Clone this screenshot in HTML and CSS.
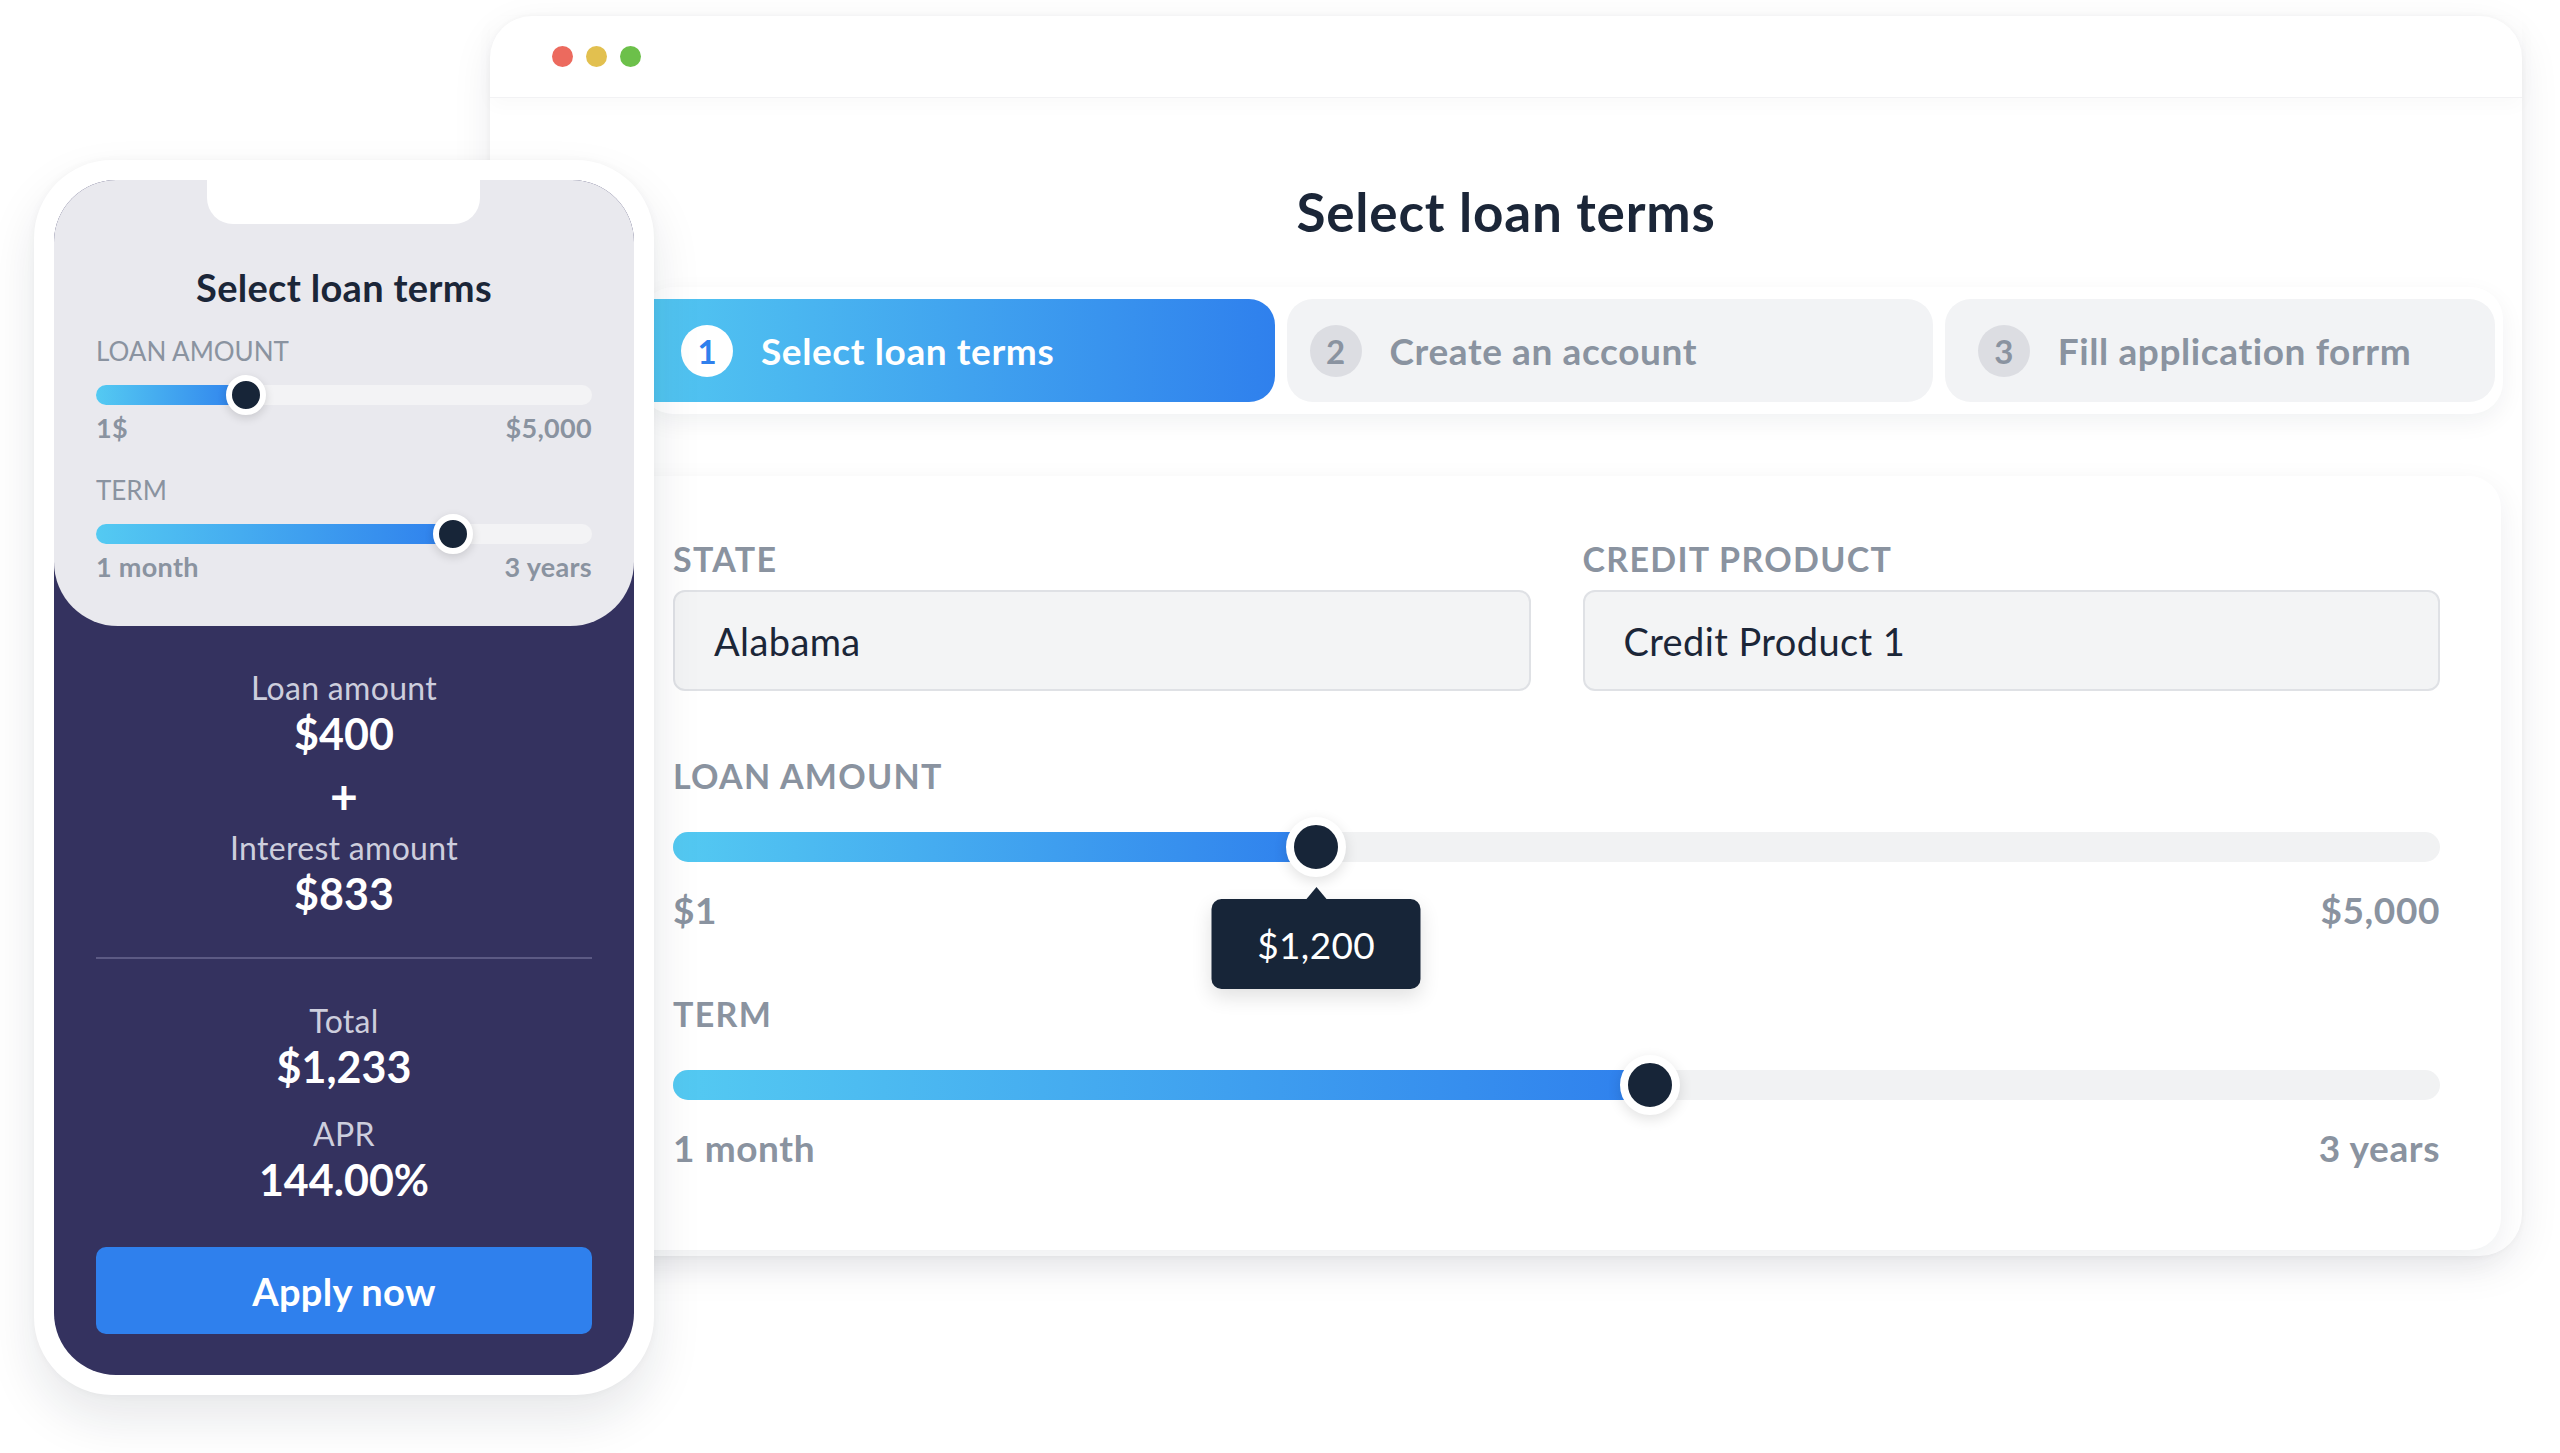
FILE: index.html
```html
<!DOCTYPE html>
<html lang="en">
<head>
    <meta charset="UTF-8">
    <meta name="viewport" content="width=device-width, initial-scale=1.0">
    <title>Select loan terms</title>
    <link rel="stylesheet" href="styles.css">
</head>
<body>
    <div class="stage">
        <!-- Desktop browser mockup -->
        <div class="browser">
            <div class="browser-bar">
                <span class="dot dot-red"></span>
                <span class="dot dot-yellow"></span>
                <span class="dot dot-green"></span>
            </div>
            <div class="browser-body">
                <h1 class="page-title">Select loan terms</h1>

                <div class="steps">
                    <div class="step step-active step-first">
                        <span class="step-num">1</span>
                        <span class="step-label">Select loan terms</span>
                    </div>
                    <div class="step step-second">
                        <span class="step-num">2</span>
                        <span class="step-label">Create an account</span>
                    </div>
                    <div class="step step-third">
                        <span class="step-num">3</span>
                        <span class="step-label">Fill application forrm</span>
                    </div>
                </div>

                <div class="card">
                    <div class="field-row">
                        <div class="field">
                            <div class="field-label">State</div>
                            <div class="field-input">Alabama</div>
                        </div>
                        <div class="field">
                            <div class="field-label">Credit product</div>
                            <div class="field-input">Credit Product 1</div>
                        </div>
                    </div>

                    <div class="range range-amount">
                        <div class="field-label">Loan amount</div>
                        <div class="track">
                            <div class="fill" style="width: 36.4%"></div>
                            <div class="thumb" style="left: 36.4%">
                                <div class="tip">$1,200</div>
                            </div>
                        </div>
                        <div class="range-ends">
                            <span>$1</span>
                            <span>$5,000</span>
                        </div>
                    </div>

                    <div class="range range-term">
                        <div class="field-label">Term</div>
                        <div class="track">
                            <div class="fill" style="width: 55.3%"></div>
                            <div class="thumb" style="left: 55.3%"></div>
                        </div>
                        <div class="range-ends">
                            <span>1 month</span>
                            <span>3 years</span>
                        </div>
                    </div>
                </div>
            </div>
        </div>

        <!-- Phone mockup -->
        <div class="phone">
            <div class="screen">
                <div class="notch"></div>
                <div class="panel">
                    <h2 class="panel-title">Select loan terms</h2>

                    <div class="m-label">Loan amount</div>
                    <div class="m-track">
                        <div class="fill" style="width: 30.3%"></div>
                        <div class="m-thumb" style="left: 30.3%"></div>
                    </div>
                    <div class="m-ends">
                        <span>1$</span>
                        <span>$5,000</span>
                    </div>

                    <div class="m-label m-label-term">Term</div>
                    <div class="m-track">
                        <div class="fill" style="width: 71.9%"></div>
                        <div class="m-thumb" style="left: 71.9%"></div>
                    </div>
                    <div class="m-ends">
                        <span>1 month</span>
                        <span>3 years</span>
                    </div>
                </div>

                <div class="summary">
                    <div class="sum-label">Loan amount</div>
                    <div class="sum-value">$400</div>
                    <div class="sum-plus">+</div>
                    <div class="sum-label">Interest amount</div>
                    <div class="sum-value">$833</div>
                    <hr class="sum-divider">
                    <div class="sum-label sum-total">Total</div>
                    <div class="sum-value">$1,233</div>
                    <div class="sum-label sum-apr">APR</div>
                    <div class="sum-value">144.00%</div>
                    <button class="apply-btn">Apply now</button>
                </div>
            </div>
        </div>
    </div>
</body>
</html>
```

FILE: styles.css
```css
body {
    margin: 0;
    background-color: #ffffff;
    font-family: Lato, "Open Sans", sans-serif;
    color: #1b2638;
}

.stage {
    position: relative;
    width: 2560px;
    height: 1453px;
    overflow: hidden;
}

/* Desktop window */
.browser {
    position: absolute;
    left: 490px;
    top: 16px;
    width: 2032px;
    height: 1240px;
    background-color: #ffffff;
    border-radius: 42px;
    box-shadow: 0 12px 40px rgba(20, 30, 50, 0.08), 0 0 6px rgba(20, 30, 50, 0.04);
}

.browser-bar {
    position: relative;
    height: 81px;
    display: flex;
    align-items: center;
    gap: 13px;
    padding-left: 62px;
    border-bottom: 1px solid #f2f2f4;
    box-shadow: 0 8px 18px rgba(0, 0, 0, 0.025);
}

.dot {
    width: 21px;
    height: 21px;
    border-radius: 50%;
}

.dot-red { background-color: #ec6a5e; }
.dot-yellow { background-color: #e2c04f; }
.dot-green { background-color: #6cc04a; }

.browser-body {
    display: flex;
    flex-direction: column;
}

.page-title {
    margin: 84px 0 0;
    text-align: center;
    font-size: 53px;
    line-height: 60px;
    font-weight: 700;
    letter-spacing: 0.8px;
    color: #1b2638;
}

.steps {
    display: flex;
    gap: 12px;
    margin: 45px 19px 0 151px;
    padding: 12px 8px 12px 12px;
    background-color: #ffffff;
    border-radius: 32px;
    box-shadow: 0 8px 24px rgba(20, 30, 50, 0.06);
}

.step {
    height: 103px;
    display: flex;
    align-items: center;
    gap: 28px;
    padding-left: 28px;
    background-color: #f2f3f5;
    border-radius: 26px;
}

.step-first { flex: 622 1 0; border-radius: 0 26px 26px 0; }
.step-second { flex: 653 1 0; padding-left: 23px; }
.step-third { flex: 542 1 0; padding-left: 33px; }

.step-num {
    width: 52px;
    height: 52px;
    border-radius: 50%;
    display: flex;
    align-items: center;
    justify-content: center;
    background-color: #dcdde2;
    color: #8a93a0;
    font-size: 33px;
    font-weight: 700;
}

.step-label {
    font-size: 37px;
    font-weight: 700;
    letter-spacing: 0.6px;
    color: #8a93a0;
}

.step-active {
    background: linear-gradient(90deg, #52c6f1 0%, #2f80ed 100%);
}

.step-active .step-num {
    background-color: #ffffff;
    color: #2f80ed;
}

.step-active .step-label {
    color: #ffffff;
}

/* Form card */
.card {
    margin: 62px 21px 0 122px;
    padding: 64px 61px 82px;
    background-color: #ffffff;
    border-radius: 32px;
    box-shadow: 0 10px 30px rgba(20, 30, 50, 0.07);
}

.field-row {
    display: grid;
    grid-template-columns: 1fr 1fr;
    gap: 52px;
}

.field-label {
    font-size: 34px;
    line-height: 38px;
    font-weight: 700;
    letter-spacing: 1.3px;
    text-transform: uppercase;
    color: #8a93a0;
}

.field-input {
    margin-top: 12px;
    height: 97px;
    display: flex;
    align-items: center;
    padding-left: 39px;
    background-color: #f3f4f5;
    border: 2px solid #dfe1e5;
    border-radius: 12px;
    font-size: 38px;
    letter-spacing: 0.4px;
    color: #1b2638;
}

.range-amount {
    margin-top: 66px;
}

.range-term {
    margin-top: 65px;
}

.track {
    position: relative;
    height: 30px;
    margin-top: 37px;
    background-color: #f1f2f3;
    border-radius: 15px;
}

.fill {
    height: 100%;
    border-radius: inherit;
    background: linear-gradient(90deg, #54caf2 0%, #2f80ed 100%);
}

.thumb {
    position: absolute;
    top: 50%;
    width: 44px;
    height: 44px;
    border: 8px solid #ffffff;
    border-radius: 50%;
    background-color: #172538;
    transform: translate(-50%, -50%);
    box-shadow: 0 4px 14px rgba(0, 0, 0, 0.12);
}

.tip {
    position: absolute;
    top: calc(100% + 30px);
    left: 50%;
    transform: translateX(-50%);
    width: 209px;
    height: 90px;
    display: flex;
    align-items: center;
    justify-content: center;
    background-color: #172538;
    border-radius: 10px;
    color: #ffffff;
    font-size: 37px;
    letter-spacing: 0.4px;
    box-shadow: 0 8px 20px rgba(0, 0, 0, 0.12);
}

.tip::before {
    content: "";
    position: absolute;
    top: -12px;
    left: 50%;
    margin-left: -10px;
    border-left: 10px solid transparent;
    border-right: 10px solid transparent;
    border-bottom: 12px solid #172538;
}

.range-ends {
    display: flex;
    justify-content: space-between;
    margin-top: 28px;
    font-size: 37px;
    line-height: 40px;
    font-weight: 700;
    letter-spacing: 0.6px;
    color: #8a93a0;
}

/* Phone */
.phone {
    position: absolute;
    left: 34px;
    top: 160px;
    width: 620px;
    height: 1235px;
    padding: 20px;
    box-sizing: border-box;
    background-color: #ffffff;
    border-radius: 78px;
    box-shadow: 0 24px 50px rgba(20, 30, 50, 0.1), 0 0 8px rgba(20, 30, 50, 0.04);
}

.screen {
    position: relative;
    height: 100%;
    display: flex;
    flex-direction: column;
    background-color: #34325f;
    border-radius: 62px;
    overflow: hidden;
}

.notch {
    position: absolute;
    top: 0;
    left: 153px;
    width: 273px;
    height: 44px;
    background-color: #ffffff;
    border-radius: 0 0 26px 26px;
}

.panel {
    padding: 85px 42px 44px;
    background-color: #e9e9ee;
    border-radius: 0 0 64px 64px;
}

.panel-title {
    margin: 0;
    text-align: center;
    font-size: 38px;
    line-height: 44px;
    font-weight: 700;
    letter-spacing: 0.3px;
    color: #1b2638;
}

.m-label {
    margin-top: 26px;
    font-size: 26px;
    line-height: 32px;
    text-transform: uppercase;
    color: #8a93a0;
}

.m-label-term {
    margin-top: 31px;
}

.m-track {
    position: relative;
    height: 20px;
    margin-top: 18px;
    background-color: #f3f3f5;
    border-radius: 10px;
}

.m-thumb {
    position: absolute;
    top: 50%;
    width: 28px;
    height: 28px;
    border: 6px solid #ffffff;
    border-radius: 50%;
    background-color: #172538;
    transform: translate(-50%, -50%);
    box-shadow: 0 3px 10px rgba(0, 0, 0, 0.14);
}

.m-ends {
    display: flex;
    justify-content: space-between;
    margin-top: 8px;
    font-size: 27px;
    line-height: 30px;
    font-weight: 700;
    letter-spacing: 0.3px;
    color: #8a93a0;
}

.summary {
    display: flex;
    flex-direction: column;
    align-items: center;
    padding: 44px 42px 0;
}

.sum-label {
    font-size: 32px;
    line-height: 36px;
    letter-spacing: 0.3px;
    color: #cdcedd;
}

.sum-value {
    margin-top: 4px;
    font-size: 43px;
    line-height: 48px;
    font-weight: 700;
    color: #ffffff;
}

.sum-plus {
    margin: 14px 0 10px;
    font-size: 48px;
    line-height: 48px;
    font-weight: 700;
    color: #ffffff;
}

.sum-divider {
    width: 100%;
    margin: 39px 0 0;
    border: none;
    border-top: 2px solid #5c5a84;
}

.sum-total {
    margin-top: 44px;
}

.sum-apr {
    margin-top: 25px;
}

.apply-btn {
    width: 100%;
    height: 87px;
    margin-top: 43px;
    border: none;
    border-radius: 10px;
    background-color: #2f80ed;
    color: #ffffff;
    font-family: inherit;
    font-size: 38px;
    font-weight: 700;
    letter-spacing: 0.3px;
    cursor: pointer;
}
```
